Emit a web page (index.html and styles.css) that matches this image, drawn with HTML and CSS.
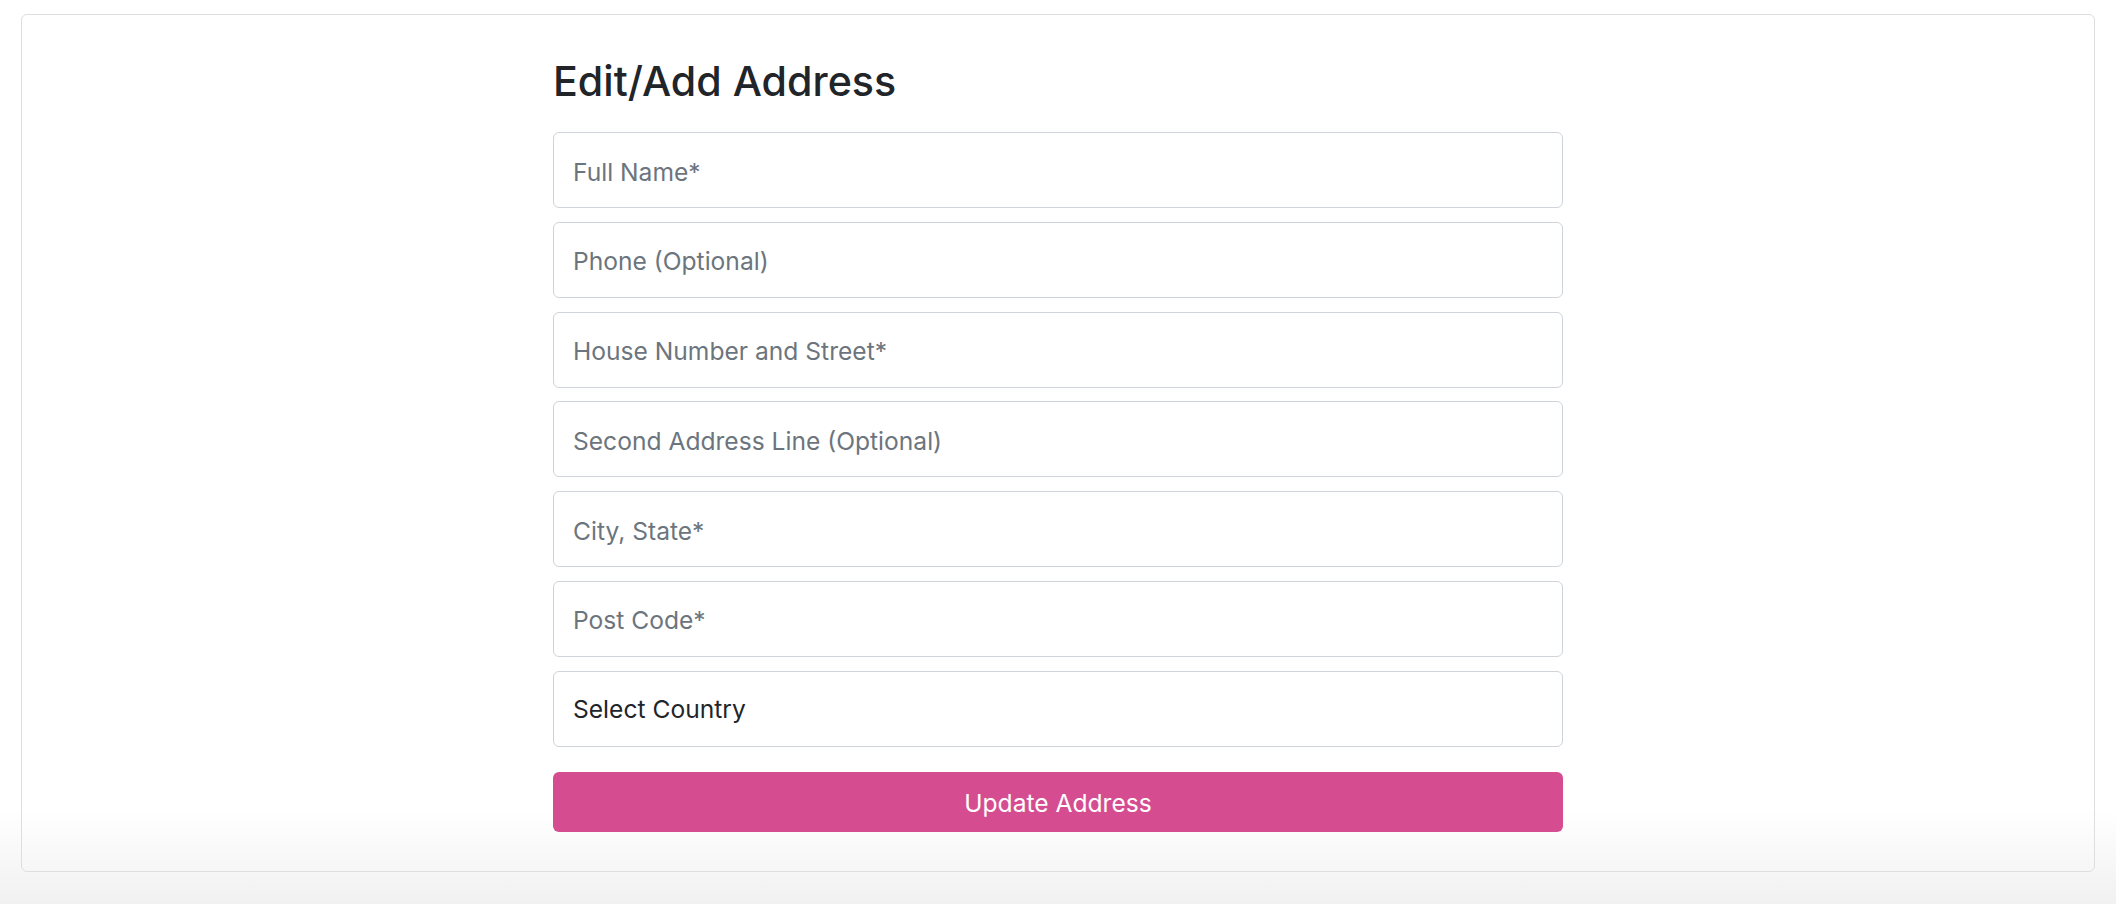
FILE: index.html
```html
<!DOCTYPE html>
<html lang="en">
<head>
<meta charset="utf-8">
<title>Edit/Add Address</title>
<link rel="stylesheet" href="styles.css">
</head>
<body>
<div class="page">
  <div class="card">
    <form class="address-form">
      <h3 class="title">Edit/Add Address</h3>
      <input class="field" type="text" placeholder="Full Name*">
      <input class="field" type="text" placeholder="Phone (Optional)">
      <input class="field" type="text" placeholder="House Number and Street*">
      <input class="field" type="text" placeholder="Second Address Line (Optional)">
      <input class="field" type="text" placeholder="City, State*">
      <input class="field" type="text" placeholder="Post Code*">
      <select class="field select">
        <option>Select Country</option>
      </select>
      <button class="submit" type="button">Update Address</button>
    </form>
  </div>
</div>
</body>
</html>
```

FILE: styles.css
```css
html, body {
  margin: 0;
  padding: 0;
}
body {
  min-height: 904px;
  background: linear-gradient(to bottom, #ffffff 0, #ffffff 810px, #f1f1f1 904px);
  font-family: Inter, "Liberation Sans", Arial, sans-serif;
  color: #212529;
}
.page {
  padding: 14px 21px 0;
}
.card {
  border: 1px solid #dedede;
  border-radius: 6px;
  padding: 42px 0 39.5px;
}
.address-form {
  width: 1010px;
  margin: 0 auto;
  display: flex;
  flex-direction: column;
}
.title {
  margin: 0 0 25.6px;
  font-size: 41.2px;
  line-height: 1.2;
  font-weight: 500;
  color: #212529;
}
.field {
  box-sizing: border-box;
  height: 76px;
  margin: 0 0 13.75px;
  padding: 3px 19px 0;
  border: 1px solid #ced4da;
  border-radius: 6px;
  background: #fff;
  font-family: inherit;
  font-size: 24.6px;
  color: #212529;
  outline: none;
}
.field::placeholder {
  color: #6c757d;
  opacity: 1;
}
.select {
  -webkit-appearance: none;
  appearance: none;
  margin-bottom: 0;
  padding-top: 1px;
}
.submit {
  margin-top: 25.3px;
  height: 60px;
  padding: 2px 0 0;
  border: none;
  border-radius: 6px;
  background: #d54d90;
  color: #fff;
  font-family: inherit;
  font-size: 24.6px;
  cursor: pointer;
}
```
